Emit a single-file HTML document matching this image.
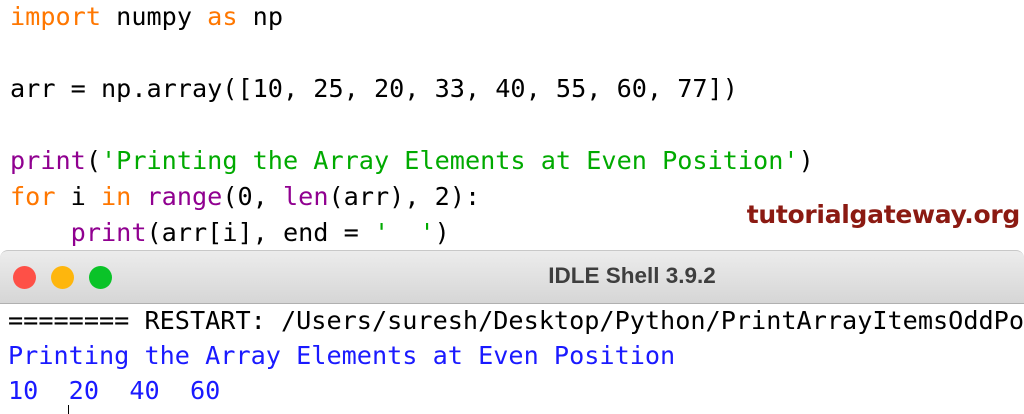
<!DOCTYPE html>
<html><head><style>
body{margin:0;width:1024px;height:414px;overflow:hidden;background:#fff;position:relative;font-family:"DejaVu Sans Mono","Liberation Mono",monospace;}
.code{position:absolute;left:10px;top:-1px;font-size:25.2px;line-height:36px;white-space:pre;color:#000;}
.k{color:#ff7700}.s{color:#00aa00}.b{color:#900090}
.wm{position:absolute;right:4px;top:200px;font-family:"DejaVu Sans","Liberation Sans",sans-serif;font-weight:bold;font-size:25px;color:#8b1a12;letter-spacing:-0.3px}
.tb{position:absolute;left:0;top:250px;width:1024px;height:52px;background:linear-gradient(#ececec,#d6d6d6);border-top:1px solid #c8c8c8;border-bottom:1px solid #b0b0b0;border-radius:8px 8px 0 0}
.dot{position:absolute;top:15px;width:23px;height:23px;border-radius:50%}
.title{position:absolute;left:0;width:1264px;text-align:center;top:12px;font-family:"Liberation Sans",sans-serif;font-weight:bold;font-size:22.5px;color:#3e3e3e}
.sh{position:absolute;left:8px;top:303px;font-size:25.2px;line-height:35px;white-space:pre;color:#000}
.bl{color:#1a1aff}
</style></head><body>
<div class="code"><span class="k">import</span> numpy <span class="k">as</span> np

arr = np.array([10, 25, 20, 33, 40, 55, 60, 77])

<span class="b">print</span>(<span class="s">'Printing the Array Elements at Even Position'</span>)
<span class="k">for</span> i <span class="k">in</span> <span class="b">range</span>(0, <span class="b">len</span>(arr), 2):
    <span class="b">print</span>(arr[i], end = <span class="s">'  '</span>)</div>
<div class="wm">tutorialgateway.org</div>
<div class="tb">
<div class="dot" style="left:13px;background:#fe5047"></div>
<div class="dot" style="left:51px;background:#feb60d"></div>
<div class="dot" style="left:89px;background:#0ac328"></div>
<div class="title">IDLE Shell 3.9.2</div>
</div>
<div class="sh">======== RESTART: /Users/suresh/Desktop/Python/PrintArrayItemsOddPo
<span class="bl">Printing the Array Elements at Even Position</span>
<span class="bl">10  20  40  60</span></div>
<div style="position:absolute;left:68px;top:405px;width:1px;height:9px;background:#000"></div>
</body></html>
